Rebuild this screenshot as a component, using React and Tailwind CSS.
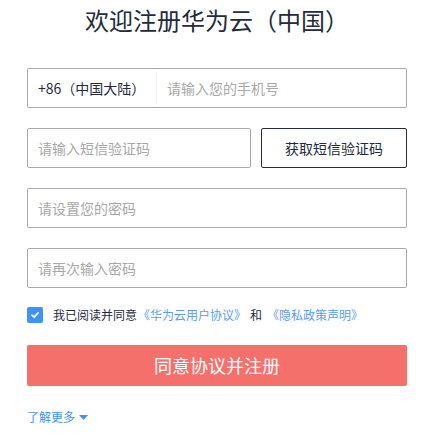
import React from "react";

const font = { fontFamily: '"Noto Sans CJK SC", "Noto Sans", sans-serif' };

function Field({ placeholder, className = "" }) {
  return (
    <div className={`h-[40px] border border-[#a8a8a8] rounded-[2px] flex items-center px-[10px] text-[14px] text-[#a8a8a8] ${className}`}>
      {placeholder}
    </div>
  );
}

export default function App() {
  return (
    <div className="w-[448px] h-[435px] bg-white overflow-hidden" style={font}>
      <div className="ml-[27px] pt-[4px] w-[380px]">
        <h1 className="h-[32px] leading-[32px] text-[24px] text-[#252b3a] text-center font-normal">
          欢迎注册华为云（中国）
        </h1>
        <div className="mt-[32px] flex flex-col gap-[20px]">
          <div className="h-[40px] border border-[#a8a8a8] rounded-[2px] flex items-center text-[14px]">
            <div className="w-[129px] h-full flex items-center pl-[10px] text-[#252b3a] border-r border-[#f7f7f7]">
              +86（中国大陆）
            </div>
            <div className="pl-[10px] text-[#a8a8a8]">请输入您的手机号</div>
          </div>
          <div className="flex gap-[10px]">
            <Field placeholder="请输入短信验证码" className="w-[224px]" />
            <div className="flex-1 h-[40px] border border-[#252b3a] rounded-[2px] flex items-center justify-center text-[14px] text-[#252b3a]">
              获取短信验证码
            </div>
          </div>
          <Field placeholder="请设置您的密码" />
          <Field placeholder="请再次输入密码" />
        </div>
        <div className="mt-[19px] h-[16px] flex items-center text-[12px] text-[#252b3a]">
          <div className="w-[16px] h-[16px] rounded-[2px] bg-[#3d93f7] flex items-center justify-center mr-[10px]">
            <svg width="10" height="10" viewBox="0 0 10 10">
              <path d="M2 5.2 L4.2 7.2 L8 3" stroke="white" strokeWidth="1.8" fill="none" strokeLinecap="round" strokeLinejoin="round" />
            </svg>
          </div>
          <span>我已阅读并同意</span>
          <span className="text-[#5a9cf8] ml-[1px]">《华为云用户协议》</span>
          <span className="mx-[4px]">和</span>
          <span className="text-[#5a9cf8] ml-[1px]">《隐私政策声明》</span>
        </div>
        <div className="mt-[22px] h-[41px] rounded-[2px] bg-[#f6706b] flex items-center justify-center text-[18px] text-white">
          同意协议并注册
        </div>
        <div className="mt-[22px] flex items-center text-[12px] leading-[18px] text-[#3d93f7]">
          <span>了解更多</span>
          <svg width="9" height="5" viewBox="0 0 9 5" className="ml-[4px]">
            <path d="M0 0 L9 0 L4.5 5 Z" fill="#3d93f7" />
          </svg>
        </div>
      </div>
    </div>
  );
}
